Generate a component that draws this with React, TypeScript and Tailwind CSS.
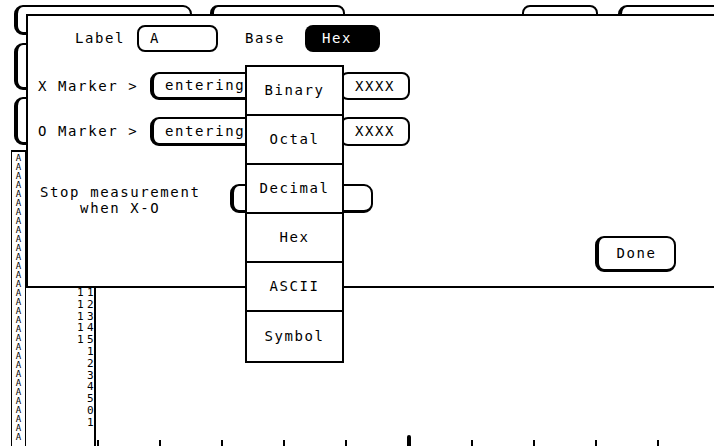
import React from "react";

const mono = "font-['DejaVu_Sans_Mono','Liberation_Mono',monospace]";

// scanned-screen key styles
const shadowBox = "border-2 border-l-4 border-b-[3px] border-black rounded-[9px]";
const thinBox = "border-2 border-black rounded-[8px]";

const Field = ({ className, children }: { className: string; children?: React.ReactNode }) => (
  <div className={`${className} flex items-center shrink-0 bg-white`}>{children}</div>
);

const baseMenu = ["Binary", "Octal", "Decimal", "Hex", "ASCII", "Symbol"];
const digits = [
  ["1", "1"],
  ["1", "2"],
  ["1", "3"],
  ["1", "4"],
  ["1", "5"],
  ["", "1"],
  ["", "2"],
  ["", "3"],
  ["", "4"],
  ["", "5"],
  ["", "0"],
  ["", "1"],
];

const App = () => {
  const aRows = Array.from({ length: 32 }, (_, i) => i);
  const ticks = Array.from({ length: 10 }, (_, i) => i);

  return (
    <div className={`relative w-[714px] h-[446px] overflow-hidden bg-white text-black ${mono}`}>
      {/* listing behind the dialog */}
      <div className="flex flex-col h-full">
        <div className="flex items-start pt-[5px] h-[35px] shrink-0">
          <div className={`ml-[14px] w-[178px] h-[30px] shrink-0 ${shadowBox}`} />
          <div className={`ml-[18px] w-[135px] h-[30px] shrink-0 ${thinBox} border-l-4`} />
          <div className={`ml-[177px] w-[76px] h-[30px] shrink-0 ${thinBox}`} />
          <div className={`ml-[20px] w-[120px] h-[30px] shrink-0 ${shadowBox}`} />
        </div>
        <div className={`mt-[8px] ml-[14px] w-[100px] h-[47px] shrink-0 ${shadowBox}`} />
        <div className={`mt-[7px] ml-[14px] w-[100px] h-[48px] shrink-0 ${shadowBox}`} />

        <div className="mt-[5px] flex flex-1 min-h-0">
          <div className="ml-[11px] w-[15px] border-x-[1.5px] border-t-2 border-black flex flex-col items-center pt-[2px] text-[9px] leading-[9px]">
            {aRows.map((i) => (
              <span key={i}>A</span>
            ))}
          </div>
          <div className="w-[51px]" />
          <div className="w-[17px] pt-[137px] flex flex-col text-[11px] leading-[11.8px]">
            {digits.map(([t, o], i) => (
              <div key={i} className="flex">
                <span className="w-[10px]">{t}</span>
                <span>{o}</span>
              </div>
            ))}
          </div>
          <div className="flex-1 border-l-2 border-black flex flex-col justify-end">
            <div className="flex items-end h-[10px] pl-[1px] gap-[60px]">
              {ticks.map((i) =>
                i === 5 ? (
                  <div key={i} className="w-[4px] h-[11px] bg-black rounded-t-full" />
                ) : (
                  <div key={i} className="w-[2px] h-[6px] bg-black" />
                )
              )}
            </div>
          </div>
        </div>
      </div>

      {/* marker dialog */}
      <div className="absolute left-[26px] top-[14px] w-[720px] h-[274px] border-2 border-r-0 border-black bg-white flex flex-col text-[14px] tracking-[1.6px]">
        <div className="mt-[9px] h-[27px] flex items-center">
          <span className="ml-[47px] w-[62px] shrink-0">Label</span>
          <Field className={`w-[81px] h-[27px] pl-[11px] ${thinBox}`}>A</Field>
          <span className="ml-[27px] w-[60px] shrink-0">Base</span>
          <div className="w-[75px] h-[27px] rounded-[8px] bg-black text-white flex items-center pl-[17px] shrink-0">
            Hex
          </div>
        </div>

        <div className="mt-[20px] h-[28px] flex items-center">
          <span className="ml-[10px] w-[112px] shrink-0 whitespace-pre">X Marker &gt;</span>
          <Field className={`w-[170px] h-[28px] pl-[11px] ${shadowBox}`}>entering</Field>
          <Field className={`ml-[20px] w-[70px] h-[28px] justify-center ${thinBox}`}>XXXX</Field>
        </div>

        <div className="mt-[17px] h-[29px] flex items-center">
          <span className="ml-[10px] w-[112px] shrink-0 whitespace-pre">O Marker &gt;</span>
          <Field className={`w-[170px] h-[29px] pl-[11px] ${shadowBox}`}>entering</Field>
          <Field className={`ml-[20px] w-[70px] h-[29px] justify-center ${thinBox}`}>XXXX</Field>
        </div>

        <div className="mt-[38px] h-[29px] flex items-center">
          <div className="ml-[12px] w-[190px] shrink-0">
            <div className="inline-flex flex-col items-center leading-[16px]">
              <span>Stop measurement</span>
              <span>when X-O</span>
            </div>
          </div>
          <Field className={`w-[143px] h-[29px] ${shadowBox}`} />
        </div>

        <div className={`mt-[23px] ml-[567px] w-[81px] h-[36px] flex items-center justify-center ${shadowBox}`}>
          Done
        </div>
      </div>

      {/* base pop-up menu */}
      <div className="absolute left-[245px] top-[65px] w-[99px] border-2 border-black bg-white flex flex-col text-[14px] tracking-[1.6px]">
        {baseMenu.map((b, i) => (
          <div
            key={b}
            className={`h-[49px] flex items-center justify-center ${i < baseMenu.length - 1 ? "border-b-2 border-black" : ""}`}
          >
            {b}
          </div>
        ))}
      </div>
    </div>
  );
};

export default App;
